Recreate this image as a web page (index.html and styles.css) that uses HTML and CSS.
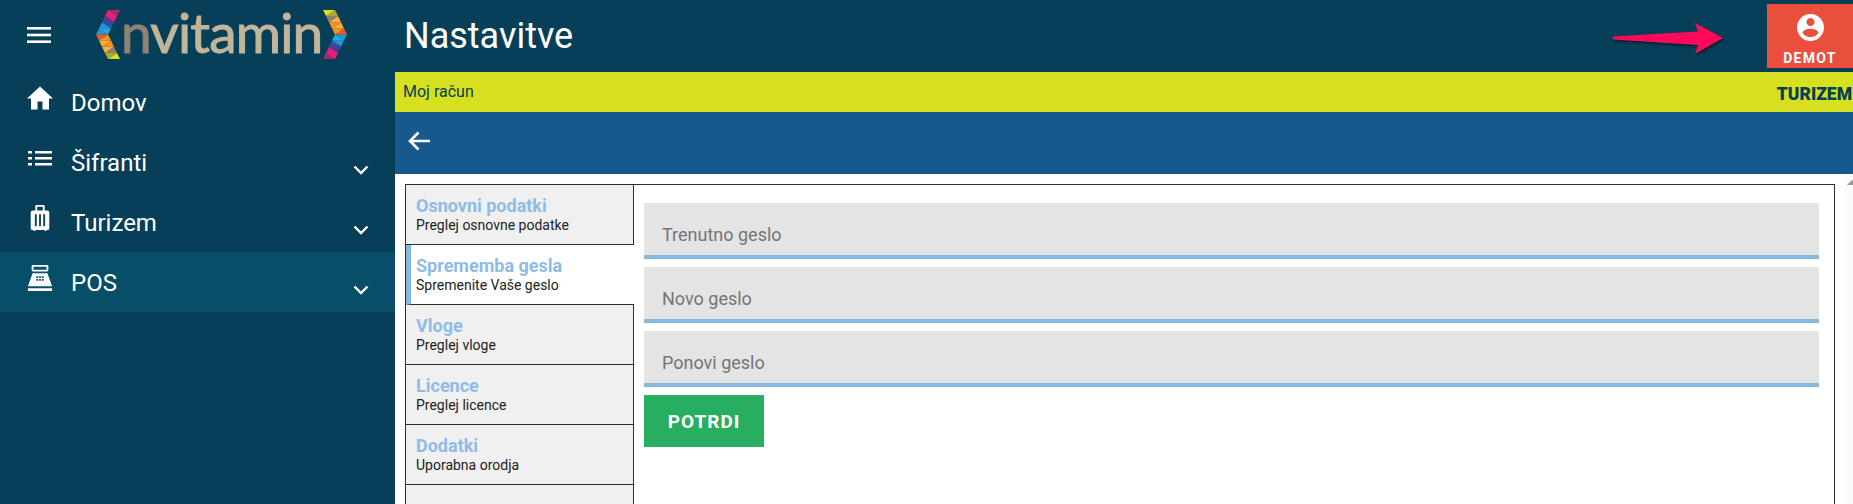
FILE: index.html
```html
<!DOCTYPE html>
<html lang="en">
<head>
    <meta charset="UTF-8">
    <title>Nastavitve</title>
    <link rel="stylesheet" href="styles.css">
</head>
<body>
    <svg class="defs" width="0" height="0">
        <defs>
            <g id="chevron">
                <polygon fill="#a6296f" points="12,0 24,0 21,6.100"/>
                <polygon fill="#ed1e79" points="12,0 21,6.100 9,6.100"/>
                <polygon fill="#e0207c" points="9,6.100 21,6.100 18,12.250"/>
                <polygon fill="#4b3f96" points="9,6.100 18,12.250 6,12.250"/>
                <polygon fill="#3a4aa0" points="6,12.250 18,12.250 15,18.400"/>
                <polygon fill="#1b9ad6" points="6,12.250 15,18.400 3,18.400"/>
                <polygon fill="#29abe2" points="3,18.400 15,18.400 12,24.500"/>
                <polygon fill="#1b9ad6" points="3,18.400 12,24.500 0,24.500"/>
                <polygon fill="#f15a24" points="0,24.500 12,24.500 3,30.600"/>
                <polygon fill="#f7931e" points="12,24.500 15,30.600 3,30.600"/>
                <polygon fill="#fbb03b" points="3,30.600 15,30.600 6,36.750"/>
                <polygon fill="#f7931e" points="15,30.600 18,36.750 6,36.750"/>
                <polygon fill="#fbb03b" points="6,36.750 18,36.750 9,42.900"/>
                <polygon fill="#8d8070" points="18,36.750 21,42.900 9,42.900"/>
                <polygon fill="#a8a832" points="9,42.900 21,42.900 12,49"/>
                <polygon fill="#d9e021" points="21,42.900 24,49 12,49"/>
            </g>
        </defs>
    </svg>

    <aside class="sidebar">
        <div class="brand">
            <svg class="hamburger" viewBox="0 0 24 16"><rect width="24" height="2.6"/><rect y="6.7" width="24" height="2.6"/><rect y="13.4" width="24" height="2.6"/></svg>
            <div class="logo">
                <svg class="chev" viewBox="0 0 24 49"><use href="#chevron"/></svg>
                <span class="logo-text"><span class="logo-n">n</span>vitamin</span>
                <svg class="chev flip" viewBox="0 0 24 49"><use href="#chevron"/></svg>
            </div>
        </div>
        <nav>
            <a class="nav-item">
                <svg class="nav-icon" viewBox="0 0 26 24"><path d="M13 0.5 0 12.5h4v11h6.500v-8h5v8H22v-11h4z"/></svg>
                <span>Domov</span>
            </a>
            <a class="nav-item">
                <svg class="nav-icon" viewBox="0 0 26 24"><path d="M1 5h4v2.500H1zM8 5h17v2.500H8zM1 11h4v2.500H1zM8 11h17v2.500H8zM1 17h4v2.500H1zM8 17h17v2.500H8z"/></svg>
                <span>Šifranti</span>
                <svg class="caret" viewBox="0 0 16 10"><path d="M1.5 1.5 8 8l6.5-6.5" /></svg>
            </a>
            <a class="nav-item">
                <svg class="nav-icon" viewBox="0 0 26 28"><path fill-rule="evenodd" d="M9 0h8a1 1 0 0 1 1 1v5h3a2 2 0 0 1 2 2v17a2 2 0 0 1-2 2h-1v1h-2v-1H8v1H6v-1H5a2 2 0 0 1-2-2V8a2 2 0 0 1 2-2h3V1a1 1 0 0 1 1-1zm1 2v4h6V2zM7.5 10v13h2V10zm4.5 0v13h2V10zm4.5 0v13h2V10z"/></svg>
                <span>Turizem</span>
                <svg class="caret" viewBox="0 0 16 10"><path d="M1.5 1.5 8 8l6.5-6.5" /></svg>
            </a>
            <a class="nav-item active">
                <svg class="nav-icon" viewBox="0 0 26 28"><path fill-rule="evenodd" d="M5.5 0h15a1.5 1.5 0 0 1 1.500 1.500v4a1.500 1.500 0 0 1-1.500 1.500h-15A1.500 1.500 0 0 1 4 5.500v-4A1.500 1.500 0 0 1 5.500 0zm.5 2v3h14V2zM5 9h16l5 14H0zm4 3v2h2v-2zm3 0v2h2v-2zm3 0v2h2v-2zm-6 3v2h2v-2zm3 0v2h2v-2zm3 0v2h2v-2zM0 25h26v3H0z"/></svg>
                <span>POS</span>
                <svg class="caret" viewBox="0 0 16 10"><path d="M1.5 1.5 8 8l6.5-6.5" /></svg>
            </a>
        </nav>
    </aside>

    <main class="main">
        <header class="topbar">
            <h1>Nastavitve</h1>
            <div class="user-box">
                <svg class="user-icon" viewBox="2 2 20 20"><path d="M12 2C6.480 2 2 6.480 2 12s4.480 10 10 10 10-4.480 10-10S17.520 2 12 2zm0 3c1.660 0 3 1.340 3 3s-1.340 3-3 3-3-1.340-3-3 1.340-3 3-3zm0 14.200c-2.500 0-4.710-1.280-6-3.220.03-1.990 4-3.080 6-3.080 1.990 0 5.970 1.090 6 3.080-1.290 1.940-3.500 3.220-6 3.220z"/></svg>
                <span>DEMOT</span>
            </div>
        </header>
        <div class="subbar">
            <span>Moj račun</span>
            <b>TURIZEM</b>
        </div>
        <div class="backbar">
            <svg class="back" viewBox="0 0 24 24"><path d="M23 12H3M11.500 3.500 3 12l8.500 8.500"/></svg>
        </div>
        <div class="content">
            <div class="panel">
                <ul class="tabs">
                    <li><b>Osnovni podatki</b><span>Preglej osnovne podatke</span></li>
                    <li class="current"><b>Sprememba gesla</b><span>Spremenite Vaše geslo</span></li>
                    <li><b>Vloge</b><span>Preglej vloge</span></li>
                    <li><b>Licence</b><span>Preglej licence</span></li>
                    <li><b>Dodatki</b><span>Uporabna orodja</span></li>
                    <li></li>
                </ul>
                <form class="form">
                    <label class="field">Trenutno geslo</label>
                    <label class="field">Novo geslo</label>
                    <label class="field">Ponovi geslo</label>
                    <button type="button" class="submit">POTRDI</button>
                </form>
            </div>
            <div class="scrollbar"><i></i></div>
        </div>
    </main>

    <svg class="pointer" viewBox="0 0 112 34"><polygon points="0,14.500 85,9.500 82,1 110,16 82,32 85,23 0,17.500"/></svg>
</body>
</html>
```

FILE: styles.css
```css
* {
    box-sizing: border-box;
}
html, body {
    margin: 0;
    height: 504px;
    overflow: hidden;
}
body {
    display: flex;
    font-family: Roboto, Arial, sans-serif;
    background: #fff;
    color: #222;
}
.defs {
    position: absolute;
}

/* sidebar */
.sidebar {
    width: 395px;
    flex: none;
    background: #063f57;
    color: #fff;
}
.brand {
    height: 72px;
    display: flex;
    align-items: center;
    padding-left: 27px;
}
.hamburger {
    width: 24px;
    height: 16px;
    fill: #fff;
    margin-top: -2px;
}
.logo {
    display: flex;
    align-items: center;
    margin-left: 45px;
    margin-top: -3px;
}
.chev {
    width: 24px;
    height: 49px;
    flex: none;
}
.flip {
    transform: rotate(180deg);
}
.logo-text {
    font-family: Lato, sans-serif;
    font-size: 55px;
    line-height: 60px;
    color: #c2b59b;
    -webkit-text-stroke: 1px currentColor;
    letter-spacing: -0.8px;
    margin: -6px 1px 0 1px;
}
.logo-n {
    color: #8f8377;
}
.nav-item {
    height: 60px;
    display: flex;
    align-items: center;
    padding-left: 27px;
    font-size: 24px;
}
.nav-item span {
    margin-top: 2px;
}
.nav-item.active {
    background: #074f68;
}
.nav-icon {
    width: 26px;
    height: 26px;
    fill: #fff;
    margin-right: 18px;
    margin-top: -8px;
}
.caret {
    width: 16px;
    height: 10px;
    fill: none;
    stroke: #fff;
    stroke-width: 2.4;
    margin-left: auto;
    margin-right: 26px;
    margin-top: 16px;
}

/* main column */
.main {
    flex: 1;
    min-width: 0;
    display: flex;
    flex-direction: column;
}
.topbar {
    height: 72px;
    flex: none;
    background: #063f57;
    color: #fff;
    display: flex;
    align-items: center;
    justify-content: space-between;
    padding-left: 9px;
}
.topbar h1 {
    margin: 0;
    font-size: 36px;
    font-weight: 400;
}
.user-box {
    width: 86px;
    height: 64px;
    background: #ea4f3d;
    display: flex;
    flex-direction: column;
    align-items: center;
    font-size: 14px;
    line-height: 16px;
    font-weight: 700;
    letter-spacing: 1.3px;
    padding-top: 10px;
}
.user-icon {
    width: 27px;
    height: 27px;
    flex: none;
    fill: #fff;
    margin-bottom: 9px;
}
.subbar {
    height: 40px;
    flex: none;
    background: #d7e01f;
    display: flex;
    align-items: center;
    justify-content: space-between;
    padding: 0 1px 0 8px;
    font-size: 16px;
    color: #063f57;
}
.subbar span {
    margin-top: -2px;
}
.subbar b {
    font-size: 17.5px;
    font-weight: 900;
    margin-top: 4px;
}
.backbar {
    height: 62px;
    flex: none;
    background: #15598e;
    display: flex;
    align-items: center;
    padding-left: 12px;
}
.back {
    width: 24px;
    height: 24px;
    fill: none;
    stroke: #fff;
    stroke-width: 2.6;
    margin-top: -4px;
}
.content {
    flex: 1;
    min-height: 0;
    display: flex;
    overflow: hidden;
}
.panel {
    width: 1430px;
    height: 340px;
    flex: none;
    margin: 10px 0 0 10px;
    border: 1px solid #2e2e2e;
    display: flex;
}
.tabs {
    width: 228px;
    flex: none;
    margin: 0;
    padding: 0;
    list-style: none;
    border-right: 1px solid #2e2e2e;
}
.tabs li {
    height: 60px;
    padding: 10px 10px 0 10px;
    background: #f0f0f0;
    border-bottom: 1px solid #2e2e2e;
    display: flex;
    flex-direction: column;
}
.tabs li b {
    font-size: 18px;
    line-height: 22px;
    color: #8fbce6;
}
.tabs li span {
    font-size: 14px;
    line-height: 17px;
    color: #222;
}
.tabs li.current {
    background: #fff;
    border-left: 5px solid #8ab8dd;
    padding-left: 5px;
    margin-right: -1px;
}
.form {
    flex: 1;
    padding: 18px 15px 0 10px;
    display: flex;
    flex-direction: column;
    align-items: flex-start;
    gap: 8px;
}
.field {
    width: 100%;
    height: 56px;
    background: #e4e4e4;
    border-bottom: 4px solid #8ab8dd;
    padding: 21px 18px 0;
    font-size: 18px;
    color: #757575;
}
.submit {
    width: 120px;
    height: 52px;
    background: #27ae60;
    color: #fff;
    border: none;
    font-family: inherit;
    font-size: 19px;
    font-weight: 700;
    letter-spacing: 1px;
}
.scrollbar {
    flex: 1;
    background: #fafafa;
    margin: 0 0 0 9px;
    position: relative;
}
.scrollbar i {
    position: absolute;
    top: 6px;
    left: 3px;
    border: 5px solid transparent;
    border-top: 0;
    border-bottom: 5px solid #999;
}

/* annotation arrow drawn over the screenshot */
.pointer {
    position: absolute;
    left: 1613px;
    top: 22px;
    width: 112px;
    height: 34px;
    fill: #ff0a5a;
    filter: drop-shadow(1px 2px 1px rgba(0, 0, 0, 0.45));
}
```
